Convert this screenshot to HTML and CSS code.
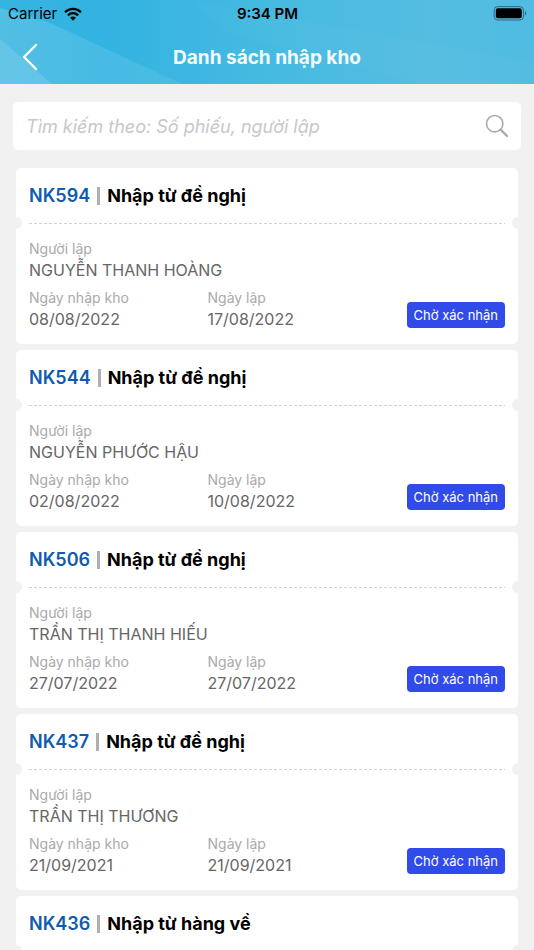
FILE: index.html
```
<!DOCTYPE html>
<html lang="vi">
<head>
	<meta charset="utf-8">
	<meta name="viewport" content="width=device-width, initial-scale=1">
	<title>Danh sách nhập kho</title>
	<link rel="stylesheet" href="styles.css">
</head>
<body>
<div class="app">
	<header class="header">
		<svg class="header-bg" viewBox="0 0 534 84" preserveAspectRatio="none" aria-hidden="true">
			<defs>
				<linearGradient id="sky" x1="0" y1="0" x2="1" y2="0">
					<stop offset="0" stop-color="#35b4e0"/>
					<stop offset="0.2" stop-color="#32b3e1"/>
					<stop offset="0.5" stop-color="#46bae1"/>
					<stop offset="0.8" stop-color="#54bde1"/>
					<stop offset="1" stop-color="#50bce1"/>
				</linearGradient>
				<linearGradient id="ray" x1="0" y1="0" x2="1" y2="0">
					<stop offset="0" stop-color="#fff" stop-opacity="0.14"/>
					<stop offset="1" stop-color="#fff" stop-opacity="0.08"/>
				</linearGradient>
			</defs>
			<rect width="534" height="84" fill="url(#sky)"/>
			<path d="M0 8L48 22L182 84H0Z" fill="url(#ray)"/>
			<path d="M0 39L52 84H0Z" fill="#fff" fill-opacity="0.12"/>
			<path d="M190 0L534 62V84H420L230 34Z" fill="#fff" fill-opacity="0.02"/>
		</svg>
		<div class="status">
			<div class="carrier">
				<span>Carrier</span>
				<svg width="18" height="14" viewBox="0 0 18 14" aria-hidden="true">
					<g fill="none" stroke="#000" stroke-width="2.3">
						<path d="M1 5.2C5.5 0.8 12.5 0.8 17 5.2"/>
						<path d="M3.9 8.3C6.8 5.5 11.2 5.5 14.1 8.3"/>
					</g>
					<path d="M9 13.7L6.1 10.7C7.7 9.2 10.3 9.2 11.9 10.7Z"/>
				</svg>
			</div>
			<time class="clock">9:34 PM</time>
			<svg class="battery" width="34" height="15" viewBox="0 0 34 15" aria-hidden="true">
				<rect x="1.1" y="0.6" width="29.4" height="13.4" rx="3.6" fill="none" stroke="#1f4b5b" stroke-opacity="0.7"/>
				<rect x="2.8" y="2.3" width="26" height="10" rx="2"/>
				<path d="M32 5C33.7 5.8 33.7 8.8 32 9.6Z" fill="#1f4b5b" fill-opacity="0.8"/>
			</svg>
		</div>
		<div class="nav">
			<button class="back" type="button" aria-label="Quay lại">
				<svg width="16" height="28" viewBox="0 0 16 28" aria-hidden="true">
					<path d="M14 2L2 14L14 26" fill="none" stroke="#fff" stroke-width="2.4" stroke-linecap="round" stroke-linejoin="round"/>
				</svg>
			</button>
			<h1 class="title">Danh sách nhập kho</h1>
		</div>
	</header>

	<main class="content">
		<form class="search">
			<input class="search-input" type="text" aria-label="Tìm kiếm" placeholder="Tìm kiếm theo: Số phiếu, người lập">
			<button class="search-btn" type="submit" aria-label="Tìm">
				<svg width="24" height="24" viewBox="0 0 24 24" aria-hidden="true">
					<circle cx="9.7" cy="9.7" r="8.2" fill="none" stroke="#aaa" stroke-width="1.6"/>
					<path d="M15.6 15.6L22 22" stroke="#aaa" stroke-width="2.4" stroke-linecap="round"/>
				</svg>
			</button>
		</form>

		<section class="list">
			<article class="card">
				<h2 class="card-head"><span class="code">NK594</span><span class="bar"></span>Nhập từ đề nghị</h2>
				<div class="divider"></div>
				<dl class="card-body">
					<div class="field full"><dt>Người lập</dt><dd>NGUYỄN THANH HOÀNG</dd></div>
					<div class="field"><dt>Ngày nhập kho</dt><dd>08/08/2022</dd></div>
					<div class="field"><dt>Ngày lập</dt><dd>17/08/2022</dd></div>
					<div class="state"><dd class="badge">Chờ xác nhận</dd></div>
				</dl>
			</article>

			<article class="card">
				<h2 class="card-head"><span class="code">NK544</span><span class="bar"></span>Nhập từ đề nghị</h2>
				<div class="divider"></div>
				<dl class="card-body">
					<div class="field full"><dt>Người lập</dt><dd>NGUYỄN PHƯỚC HẬU</dd></div>
					<div class="field"><dt>Ngày nhập kho</dt><dd>02/08/2022</dd></div>
					<div class="field"><dt>Ngày lập</dt><dd>10/08/2022</dd></div>
					<div class="state"><dd class="badge">Chờ xác nhận</dd></div>
				</dl>
			</article>

			<article class="card">
				<h2 class="card-head"><span class="code">NK506</span><span class="bar"></span>Nhập từ đề nghị</h2>
				<div class="divider"></div>
				<dl class="card-body">
					<div class="field full"><dt>Người lập</dt><dd>TRẦN THỊ THANH HIẾU</dd></div>
					<div class="field"><dt>Ngày nhập kho</dt><dd>27/07/2022</dd></div>
					<div class="field"><dt>Ngày lập</dt><dd>27/07/2022</dd></div>
					<div class="state"><dd class="badge">Chờ xác nhận</dd></div>
				</dl>
			</article>

			<article class="card">
				<h2 class="card-head"><span class="code">NK437</span><span class="bar"></span>Nhập từ đề nghị</h2>
				<div class="divider"></div>
				<dl class="card-body">
					<div class="field full"><dt>Người lập</dt><dd>TRẦN THỊ THƯƠNG</dd></div>
					<div class="field"><dt>Ngày nhập kho</dt><dd>21/09/2021</dd></div>
					<div class="field"><dt>Ngày lập</dt><dd>21/09/2021</dd></div>
					<div class="state"><dd class="badge">Chờ xác nhận</dd></div>
				</dl>
			</article>

			<article class="card">
				<h2 class="card-head"><span class="code">NK436</span><span class="bar"></span>Nhập từ hàng về</h2>
				<div class="divider"></div>
			</article>
		</section>
	</main>
</div>
</body>
</html>
```
FILE: styles.css
```
*{
	box-sizing: border-box;
}
body{
	margin: 0;
	background: #f1f1f1;
	font-family: Inter,"Noto Sans",sans-serif;
	color: #000;
}
h1,h2,dl,dd{
	margin: 0;
}
button{
	display: flex;
	padding: 0;
	border: 0;
	background: none;
	cursor: pointer;
}
.app{
	display: flex;
	flex-direction: column;
	height: 100vh;
}

/* header */
.header{
	position: relative;
	flex: none;
}
.header-bg{
	position: absolute;
	top: 0;
	left: 0;
	width: 100%;
	height: 100%;
}
.status,.nav{
	position: relative;
	display: grid;
	grid-template-columns: 1fr auto 1fr;
	align-items: center;
}
.status{
	height: 27px;
	padding: 0 7px 0 8px;
	font-size: 15px;
}
.carrier{
	display: flex;
	align-items: center;
	gap: 7px;
}
.clock{
	font-weight: 600;
}
.battery{
	justify-self: end;
}
.nav{
	height: 57px;
	padding: 3px 22px 0;
}
.title{
	font-size: 19px;
	font-weight: 700;
	color: #f4fbfe;
}

/* search */
.content{
	flex: 1;
	min-height: 0;
	overflow: hidden auto;
	scrollbar-width: none;
}
.search{
	display: flex;
	align-items: center;
	height: 48px;
	margin: 18px 13px;
	padding: 0 12px 0 13px;
	background: #fff;
	border-radius: 5px;
}
.search-input{
	flex: 1;
	min-width: 0;
	padding: 0;
	border: 0;
	outline: 0;
	background: none;
	font-family: inherit;
	font-size: 18px;
	font-style: italic;
}
.search-input::placeholder{
	color: #c7c7cc;
}

/* cards */
.list{
	display: flex;
	flex-direction: column;
	gap: 6px;
	padding: 0 16px;
}
.card{
	background: #fff;
	border-radius: 5px;
}
.card-head{
	display: flex;
	align-items: center;
	height: 55px;
	padding: 0 13px;
	font-size: 18px;
	font-weight: 700;
}
.code{
	font-weight: 600;
	color: #0f5bb0;
}
.bar{
	width: 3px;
	height: 18px;
	margin: 0 7px;
	background: #b0b0b0;
}
.divider{
	position: relative;
	height: 1px;
	margin: 0 13px;
	background: repeating-linear-gradient(90deg,#d2d2d2 0 3px,#fff 3px 5px);
}
/* punched holes at both ends of the divider */
.divider:before,.divider:after{
	content: "";
	position: absolute;
	top: -6px;
	width: 6px;
	height: 12px;
	background: #f1f1f1;
}
.divider:before{
	left: -13px;
	border-radius: 0 6px 6px 0;
}
.divider:after{
	right: -13px;
	border-radius: 6px 0 0 6px;
}
.card-body{
	display: grid;
	grid-template-columns: 3fr 3fr 2fr;
	row-gap: 6px;
	padding: 14px 13px;
}
.full{
	grid-column: 1 / -1;
}
.field dt{
	font-size: 14px;
	line-height: 21px;
	color: #aaa;
}
.field dd{
	font-size: 16px;
	line-height: 22px;
	color: #666;
}
.state{
	display: flex;
	align-items: flex-end;
	justify-content: flex-end;
	padding-bottom: 2px;
}
.badge{
	padding: 0 7px;
	background: #304bea;
	border-radius: 4px;
	font-size: 13px;
	line-height: 26px;
	color: #fff;
	white-space: nowrap;
}
```
